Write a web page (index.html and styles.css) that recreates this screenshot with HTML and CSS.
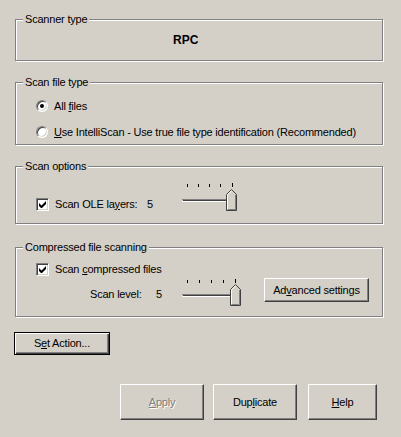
FILE: index.html
```html
<!DOCTYPE html>
<html>
<head>
<meta charset="utf-8">
<link rel="stylesheet" href="styles.css">
</head>
<body>
<div class="dialog">
  <div class="group g1">
    <span class="legend">Scanner type</span>
    <div class="rpc">RPC</div>
  </div>

  <div class="group g2">
    <span class="legend">Scan file type</span>
    <div class="opt"><span class="radio checked"></span><span>All <u>f</u>iles</span></div>
    <div class="opt"><span class="radio"></span><span><u>U</u>se IntelliScan - Use true file type identification (Recommended)</span></div>
  </div>

  <div class="group g3">
    <span class="legend">Scan options</span>
    <div class="row">
      <div class="opt w-ole"><span class="check"><svg width="7" height="7" viewBox="0 0 7 7"><path d="M0 2v3l2 2h1l4-4V0L2.5 4.5z" fill="#000"/></svg></span><span>Scan OLE la<u>y</u>ers:</span></div>
      <span class="val v1">5</span>
      <svg class="slider s1" width="60" height="28" viewBox="0 0 60 28">
        <g fill="#000"><rect x="5" y="1" width="1" height="3"/><rect x="16" y="1" width="1" height="3"/><rect x="27" y="1" width="1" height="3"/><rect x="38" y="1" width="1" height="3"/><rect x="50" y="0" width="1" height="4"/></g>
        <rect x="0" y="16" width="50" height="1" fill="#808080"/>
        <rect x="1" y="17" width="48" height="1" fill="#404040"/>
        <rect x="0" y="18" width="50" height="1" fill="#ffffff"/>
        <path d="M44.5 27.5V11.5L49.5 6.5L54.5 11.5V27.5Z" fill="#d4d0c8" stroke="#404040" stroke-width="1"/>
        <path d="M45.5 26.5V11.9L49.5 7.9" fill="none" stroke="#ffffff" stroke-width="1"/>
        <path d="M53.5 11.9V26.5H45.5" fill="none" stroke="#808080" stroke-width="1"/>
      </svg>
    </div>
  </div>

  <div class="group g4">
    <span class="legend">Compressed file scanning</span>
    <div class="opt"><span class="check"><svg width="7" height="7" viewBox="0 0 7 7"><path d="M0 2v3l2 2h1l4-4V0L2.5 4.5z" fill="#000"/></svg></span><span>Scan <u>c</u>ompressed files</span></div>
    <div class="row2">
      <span class="lvl">Scan level:</span>
      <span class="val v2">5</span>
      <svg class="slider s2" width="60" height="28" viewBox="0 0 60 28">
        <g fill="#000"><rect x="5" y="2" width="1" height="3"/><rect x="17" y="2" width="1" height="3"/><rect x="29" y="2" width="1" height="3"/><rect x="41" y="2" width="1" height="3"/><rect x="53" y="1" width="1" height="4"/></g>
        <rect x="0" y="16" width="52" height="1" fill="#808080"/>
        <rect x="1" y="17" width="50" height="1" fill="#404040"/>
        <rect x="0" y="18" width="52" height="1" fill="#ffffff"/>
        <path d="M48.5 27.5V11.5L53.5 6.5L58.5 11.5V27.5Z" fill="#d4d0c8" stroke="#404040" stroke-width="1"/>
        <path d="M49.5 26.5V11.9L53.5 7.9" fill="none" stroke="#ffffff" stroke-width="1"/>
        <path d="M57.5 11.9V26.5H49.5" fill="none" stroke="#808080" stroke-width="1"/>
      </svg>
      <button class="btn adv">Ad<u>v</u>anced settings</button>
    </div>
  </div>

  <button class="btn default setaction">S<u>e</u>t Action...</button>

  <div class="actions">
    <button class="btn wide disabled"><u>A</u>pply</button>
    <button class="btn wide">Dup<u>l</u>icate</button>
    <button class="btn help"><u>H</u>elp</button>
  </div>
</div>
</body>
</html>
```

FILE: styles.css
```css
* { box-sizing: border-box; }
html, body { margin: 0; padding: 0; background: #d4d0c8; }
body {
  font-family: "Liberation Sans", Arial, sans-serif;
  font-size: 11px;
  letter-spacing: -0.2px;
  color: #000;
  width: 401px;
  height: 437px;
  overflow: hidden;
}
u { text-decoration: underline; text-underline-offset: 1px; }
.dialog { padding: 19px 0 0 15px; }

.group {
  position: relative;
  width: 368px;
  border: 1px solid #808080;
  box-shadow: inset 1px 1px #fff, 1px 1px #fff;
}
.legend {
  position: absolute;
  top: -7px;
  left: 7px;
  padding: 0 2px;
  line-height: 13px;
  background: #d4d0c8;
}

.g1 { height: 42px; margin-bottom: 21px; display: flex; align-items: center; padding-left: 157px; }
.rpc { font-weight: bold; font-size: 12px; letter-spacing: 0; }

.g2 { height: 63px; margin-bottom: 21px; padding: 15px 0 0 20px; display: flex; flex-direction: column; gap: 10px; }
.g3 { height: 58px; margin-bottom: 23px; padding: 30px 0 0 20px; }
.g4 { height: 70px; margin-bottom: 15px; padding: 15px 0 0 20px; display: flex; flex-direction: column; gap: 2px; }

.opt { display: flex; align-items: center; gap: 6px; height: 16px; line-height: 13px; }
.g3 .opt, .g4 .opt { height: 13px; }

.radio {
  position: relative;
  width: 12px; height: 12px;
  border-radius: 50%;
  border: 1px solid;
  border-color: #808080 #fff #fff #808080;
  box-shadow: inset 1px 1px #404040, inset -1px -1px #d4d0c8;
  background: #fff;
  flex: none;
}
.radio.checked::after {
  content: "";
  position: absolute;
  left: 3px; top: 3px;
  width: 4px; height: 4px;
  border-radius: 50%;
  background: #000;
}
.check {
  width: 13px; height: 13px;
  border: 1px solid;
  border-color: #808080 #fff #fff #808080;
  box-shadow: inset 1px 1px #404040, inset -1px -1px #d4d0c8;
  background: #fff;
  display: flex; align-items: center; justify-content: center;
  flex: none;
}
.check svg { display: block; }

.row { display: flex; align-items: center; }
.w-ole { width: 111px; }
.val { line-height: 13px; }
.v1 { width: 35px; }
.s1 { display: block; margin-top: -14px; flex: none; }

.row2 { display: flex; align-items: flex-start; height: 24px; }
.lvl { margin-left: 54px; width: 66px; margin-top: 10px; line-height: 13px; }
.v2 { width: 26px; margin-top: 10px; }
.s2 { display: block; flex: none; }

.btn {
  font: inherit;
  letter-spacing: inherit;
  color: #000;
  background: #d4d0c8;
  border: 1px solid;
  border-color: #fff #404040 #404040 #fff;
  box-shadow: inset -1px -1px #808080;
  padding: 0;
  text-align: center;
  line-height: 13px;
}
.adv { width: 105px; height: 24px; margin-left: 22px; }
.btn.default {
  border: 1px solid #000;
  box-shadow: inset 1px 1px #fff, inset -1px -1px #404040, inset -2px -2px #808080;
}
.setaction { display: block; width: 96px; height: 23px; margin-left: -1px; }

.actions { display: flex; margin-top: 29px; padding-left: 105px; }
.wide { width: 84px; height: 36px; }
.actions .wide + .wide { margin-left: 9px; }
.help { width: 69px; height: 36px; margin-left: 11px; }
.disabled { color: #808080; text-shadow: 1px 1px #fff; }
```
